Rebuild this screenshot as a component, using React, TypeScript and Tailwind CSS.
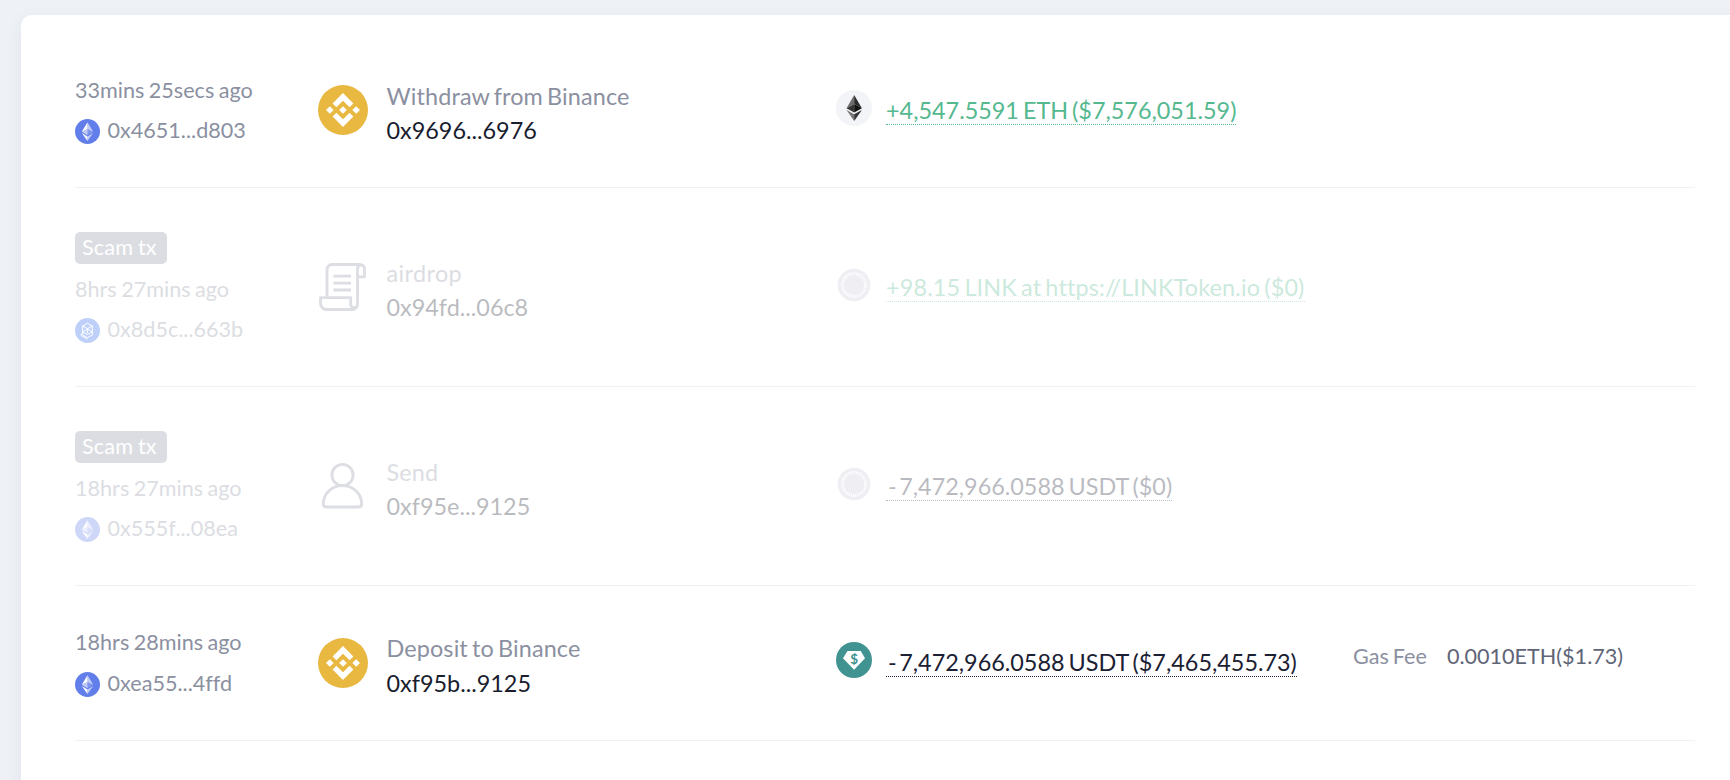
import clsx from "clsx";
import type { ReactNode } from "react";
import { SiBinance } from "react-icons/si";

type IconKind = "binance" | "contract" | "user";
type TokenKind = "eth" | "unknown" | "usdt";

interface Tx {
  time: string;
  hash: string;
  chain: "eth" | "ftm";
  scam?: boolean;
  icon: IconKind;
  title: string;
  address: string;
  token: TokenKind;
  amount: string;
  incoming?: boolean;
  gas?: string;
}

const TXS: Tx[] = [
  {
    time: "33mins 25secs ago",
    hash: "0x4651...d803",
    chain: "eth",
    icon: "binance",
    title: "Withdraw from Binance",
    address: "0x9696...6976",
    token: "eth",
    amount: "4,547.5591 ETH ($7,576,051.59)",
    incoming: true,
  },
  {
    time: "8hrs 27mins ago",
    hash: "0x8d5c...663b",
    chain: "ftm",
    scam: true,
    icon: "contract",
    title: "airdrop",
    address: "0x94fd...06c8",
    token: "unknown",
    amount: "98.15 LINK at https://LINKToken.io ($0)",
    incoming: true,
  },
  {
    time: "18hrs 27mins ago",
    hash: "0x555f...08ea",
    chain: "eth",
    scam: true,
    icon: "user",
    title: "Send",
    address: "0xf95e...9125",
    token: "unknown",
    amount: "7,472,966.0588 USDT ($0)",
  },
  {
    time: "18hrs 28mins ago",
    hash: "0xea55...4ffd",
    chain: "eth",
    icon: "binance",
    title: "Deposit to Binance",
    address: "0xf95b...9125",
    token: "usdt",
    amount: "7,472,966.0588 USDT ($7,465,455.73)",
    gas: "0.0010ETH($1.73)",
  },
];

function ChainIcon({ chain }: { chain: Tx["chain"] }) {
  if (chain === "ftm") {
    return (
      <svg viewBox="0 0 28 28" className="size-[25px]" fill="none">
        <circle cx="14" cy="14" r="14" fill="#2b67f0" />
        <g stroke="#fff" strokeWidth="1.1" strokeLinejoin="round">
          <path d="M14 6l5.5 3v10L14 22l-5.5-3V9z" />
          <path d="M8.5 9l5.5 3 5.5-3M14 12v5M8.5 15.500l5.500-3 5.500 3-5.500 3z" />
          <path d="M7 17.500v2.300L14 23.500" />
        </g>
      </svg>
    );
  }
  return (
    <svg viewBox="0 0 28 28" className="size-[25px]">
      <circle cx="14" cy="14" r="14" fill="#627eea" />
      <path d="M14 3.500v7.800l6.400 3z" fill="#fff" fillOpacity=".6" />
      <path d="M14 3.500L7.600 14.300l6.400-3z" fill="#fff" />
      <path d="M14 18.200l6.400-3.900-6.400-3z" fill="#fff" fillOpacity=".2" />
      <path d="M7.600 14.300l6.400 3.900v-6.900z" fill="#fff" fillOpacity=".6" />
      <path d="M14 19.600v5l6.400-9z" fill="#fff" fillOpacity=".6" />
      <path d="M14 24.600v-5l-6.400-4z" fill="#fff" />
    </svg>
  );
}

function ProjectIcon({ icon }: { icon: IconKind }) {
  if (icon === "binance") {
    return (
      <div className="flex size-[50px] items-center justify-center rounded-full bg-[#e8b840]">
        <SiBinance className="size-[34px] text-white" />
      </div>
    );
  }
  if (icon === "contract") {
    return (
      <svg
        viewBox="0 0 50 50"
        className="size-[50px]"
        fill="none"
        stroke="#8e93a5"
        strokeWidth="2.800"
        strokeLinejoin="round"
      >
        <path d="M9 34.500V7.500a5 5 0 0 1 5-5h29" />
        <path d="M39.500 14.800V6.500a3.500 3.500 0 0 1 7 0v8.300z" />
        <path d="M39.500 14v28a5.500 5.500 0 0 1-5.500 5.500H8.500a6 6 0 0 1-6-6v-5.800h30.200V43a3.500 3.500 0 0 0 6.800 0" />
        <path d="M15.500 14.200H33M15.500 21.200H33M15.500 28H33" />
      </svg>
    );
  }
  return (
    <svg
      viewBox="0 0 50 50"
      className="size-[50px]"
      fill="none"
      stroke="#8e93a5"
      strokeWidth="2.800"
    >
      <circle cx="24.500" cy="14" r="10.600" />
      <path d="M24.500 24.600c-11 0-19 8.300-19.200 18.200 0 2.200 1 3.200 3 3.200h32.400c2 0 3-1 3-3.200-.2-9.900-8.200-18.200-19.200-18.200z" />
    </svg>
  );
}

function TokenIcon({ token }: { token: TokenKind }) {
  if (token === "eth") {
    return (
      <svg viewBox="0 0 36 36" className="size-9">
        <circle cx="18" cy="18" r="18" fill="#f3f4f7" />
        <path d="M18.200 5v9L10.500 18.200z" fill="#6d6d6d" />
        <path d="M18.200 5v9l7.700 4.200z" fill="#2b2b2b" />
        <path d="M10.500 18.200l7.700-4.200v8.500z" fill="#343434" />
        <path d="M25.900 18.200l-7.700-4.200v8.500z" fill="#111" />
        <path d="M10.500 20l7.700 4.300V31z" fill="#777" />
        <path d="M25.900 20l-7.700 4.300V31z" fill="#343434" />
      </svg>
    );
  }
  if (token === "usdt") {
    return (
      <svg viewBox="0 0 36 36" className="size-9">
        <circle cx="18" cy="18" r="18" fill="#419392" />
        <path d="M11.500 9h13.200L29 16.200 18.100 27.800 7 16.200z" fill="#fff" />
        <text
          x="18.100"
          y="21.700"
          textAnchor="middle"
          fill="#419392"
          className="font-['Lato'] text-[13.5px] font-bold"
        >
          $
        </text>
      </svg>
    );
  }
  return (
    <svg viewBox="0 0 36 36" className="size-9" fill="none">
      <circle cx="18" cy="18" r="16.300" fill="#c8c9da" />
      <circle
        cx="18"
        cy="18"
        r="11.500"
        stroke="#fff"
        strokeWidth="3"
        strokeDasharray="1.100 .9"
      />
    </svg>
  );
}

function Faded({ on, children }: { on?: boolean; children: ReactNode }) {
  return (
    <div className={clsx("flex h-full items-center", on && "opacity-30")}>
      {children}
    </div>
  );
}

function TxRow({ tx }: { tx: Tx }) {
  return (
    <div
      className={clsx(
        "border-b border-[#f0f1f4]",
        tx.scam ? "h-[198.9px]" : "h-[154.8px]",
      )}
    >
      <Faded on={tx.scam}>
        <div
          className={clsx(
            "w-[243px] shrink-0 text-[21.6px] leading-[26px] text-[#8b90a1] [word-spacing:-1.1px]",
            !tx.scam && "mb-[0.8px]",
          )}
        >
          {tx.scam && (
            <div className="mb-3 flex h-8 w-[92px] items-center rounded-[5px] bg-[#8b90a1] pb-0.5 pl-[7px] tracking-[0.2px] text-white">
              Scam tx
            </div>
          )}
          <div>{tx.time}</div>
          <div className="mt-[14.4px] flex h-[26px] items-center">
            <span className="mt-[3px] mr-[7.5px] shrink-0">
              <ChainIcon chain={tx.chain} />
            </span>
            {tx.hash}
          </div>
        </div>

        <div className="flex w-[518px] shrink-0 items-center gap-[18.5px]">
          <ProjectIcon icon={tx.icon} />
          <div className="mt-[5.2px] text-[23.4px] leading-[26px] [word-spacing:-2px]">
            <div
              className={clsx(
                "text-[#8b90a1]",
                tx.icon === "contract" ? "tracking-[0.4px]" : "tracking-[0.13px]",
              )}
            >
              {tx.title}
            </div>
            <div className="mt-[8.2px] text-[#191d2e]">{tx.address}</div>
          </div>
        </div>

        <div className="flex w-[517px] shrink-0 items-center gap-[14px]">
          <span className="mb-[5px] shrink-0">
            <TokenIcon token={tx.token} />
          </span>
          <span
            className={clsx(
              "mt-px border-b border-dotted border-current text-[23.4px] leading-[27px] whitespace-nowrap [word-spacing:-2px]",
              tx.incoming ? "text-[#55b88f]" : "text-[#1b2033]",
              tx.incoming && tx.scam && "tracking-[0.15px]",
            )}
          >
            {tx.incoming ? "+" : <span className="mr-[-1.5px] ml-0.5">- </span>}
            {tx.amount}
          </span>
        </div>

        {tx.gas && (
          <div className="mb-[13.6px] flex gap-5 text-[21.6px] leading-[26px] whitespace-nowrap [word-spacing:-1.5px]">
            <span className="text-[#8b90a1]">Gas Fee</span>
            <span className="text-[#5f6577]">{tx.gas}</span>
          </div>
        )}
      </Faded>
    </div>
  );
}

export default function App() {
  return (
    <div className="h-[780px] overflow-hidden bg-[#eef2f7] pt-[15px] pl-[21px] font-['Lato',sans-serif] [font-variant-ligatures:none]">
      <div className="h-[900px] w-[1763px] rounded-[11px] bg-white pt-[18.4px] pr-[89px] pl-[54px] shadow-[0_6px_18px_rgba(40,50,80,0.07)]">
        {TXS.map((tx) => (
          <TxRow key={tx.hash} tx={tx} />
        ))}
      </div>
    </div>
  );
}
